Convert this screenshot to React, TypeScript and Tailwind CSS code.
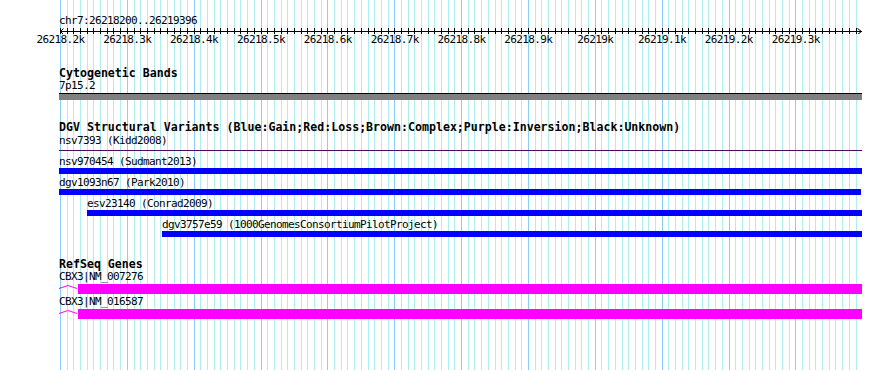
import React from "react";

const X0 = 60;
const STEP = 6.685; // 10 bp
const gx = (i: number) => Math.round(X0 + i * STEP);

const RULER_LABELS = [
  "26218.2k",
  "26218.3k",
  "26218.4k",
  "26218.5k",
  "26218.6k",
  "26218.7k",
  "26218.8k",
  "26218.9k",
  "26219k",
  "26219.1k",
  "26219.2k",
  "26219.3k",
];

const VARIANTS = [
  { label: "nsv970454 (Sudmant2013)", left: 59, right: 862 },
  { label: "dgv1093n67 (Park2010)", left: 59, right: 861 },
  { label: "esv23140 (Conrad2009)", left: 87, right: 862 },
  { label: "dgv3757e59 (1000GenomesConsortiumPilotProject)", left: 162, right: 862 },
];

const GENES = ["CBX3|NM_007276", "CBX3|NM_016587"];

function Grid() {
  const lines = Array.from({ length: 120 }, (_, i) => i);
  return (
    <svg className="absolute inset-0" width={890} height={370}>
      {lines.map((i) => (
        <line
          key={i}
          x1={gx(i) + 0.5}
          x2={gx(i) + 0.5}
          y1={0}
          y2={370}
          stroke={i % 10 === 0 ? "#87cefa" : "#afeeee"}
          strokeWidth={1}
        />
      ))}
    </svg>
  );
}

function Ruler() {
  const ticks = Array.from({ length: 120 }, (_, i) => i);
  return (
    <svg width={890} height={7} className="block">
      <line x1={60} x2={862} y1={4.5} y2={4.5} stroke="#000" />
      {ticks.map((i) => (
        <line key={i} x1={gx(i) + 0.5} x2={gx(i) + 0.5} y1={1} y2={7} stroke="#000" />
      ))}
      <polyline points="63.5,1.5 60.5,4.5 63.5,7.5" fill="none" stroke="#000" />
      <polyline points="857.5,1.5 861.5,4.5 857.5,7.5" fill="none" stroke="#000" />
    </svg>
  );
}

function TrackTitle({ children, className = "" }: { children: React.ReactNode; className?: string }) {
  return (
    <div className={`h-[13px] pl-[59px] text-[11.6px] leading-[13px] font-bold whitespace-nowrap ${className}`}>
      {children}
    </div>
  );
}

function Label({
  children,
  left = 59,
  tight = false,
}: {
  children: React.ReactNode;
  left?: number;
  tight?: boolean;
}) {
  return (
    <div
      className={`h-[12px] text-[11px] tracking-[-0.62px] whitespace-nowrap ${tight ? "leading-[10px]" : "leading-[12px]"}`}
      style={{ paddingLeft: left }}
    >
      {children}
    </div>
  );
}

export default function App() {
  return (
    <div
      className="relative w-[890px] h-[370px] overflow-hidden bg-white text-black"
      style={{ fontFamily: '"DejaVu Sans Mono", "Liberation Mono", monospace' }}
    >
      <Grid />
      <div className="relative flex flex-col">
        {/* ruler */}
        <div className="pt-[15px]">
          <Label>chr7:26218200..26219396</Label>
        </div>
        <Ruler />
        <div className="flex pl-[27px] h-[12px] text-[11px] leading-[12px] tracking-[-0.62px]">
          {RULER_LABELS.map((l) => (
            <div key={l} className="w-[66.85px] shrink-0 text-center whitespace-nowrap">
              {l}
            </div>
          ))}
        </div>

        {/* cytogenetic bands */}
        <TrackTitle className="mt-[21px]">Cytogenetic Bands</TrackTitle>
        <div className="h-[13px]">
          <Label>7p15.2</Label>
        </div>
        <div className="ml-[59px] w-[803px] h-[7px] border-t border-black bg-[#808080]" />

        {/* DGV */}
        <TrackTitle className="mt-[21px]">
          DGV Structural Variants (Blue:Gain;Red:Loss;Brown:Complex;Purple:Inversion;Black:Unknown)
        </TrackTitle>
        <div className="mt-[1px]">
          <Label>nsv7393 (Kidd2008)</Label>
          <div className="h-[6px] pt-[3px]">
            <div className="ml-[59px] w-[803px] h-[1px] bg-[#4b0b5e]" />
          </div>
        </div>
        <div className="mt-[3px] flex flex-col gap-[3px]">
          {VARIANTS.map((v) => (
            <div key={v.label}>
              <Label left={v.left}>{v.label}</Label>
              <div className="h-[6px] bg-[#0000ff]" style={{ marginLeft: v.left, width: v.right - v.left }} />
            </div>
          ))}
        </div>

        {/* RefSeq */}
        <TrackTitle className="mt-[21px]">RefSeq Genes</TrackTitle>
        <div className="mt-[1px] flex flex-col gap-[3px]">
          {GENES.map((g) => (
            <div key={g}>
              <Label tight>{g}</Label>
              <div className="flex h-[10px] pl-[59px]">
                <svg width={19} height={10} className="block shrink-0">
                  <polyline points="0,4.5 9,1.5 18,4.5" fill="none" stroke="#ff00ff" strokeWidth={1} />
                </svg>
                <div className="w-[784px] h-[10px] bg-[#ff00ff]" />
              </div>
            </div>
          ))}
        </div>
      </div>
    </div>
  );
}
